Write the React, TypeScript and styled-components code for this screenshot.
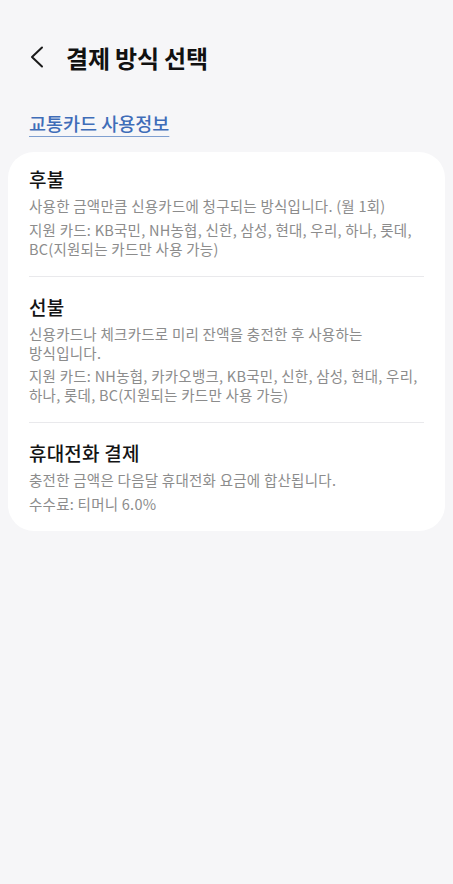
import styled, { createGlobalStyle } from "styled-components";

const GlobalStyle = createGlobalStyle`
  html, body {
    margin: 0;
    padding: 0;
    background: #f6f6f8;
  }
  body {
    font-family: "Noto Sans CJK KR", "Noto Sans", sans-serif;
  }
`;

const Page = styled.div`
  min-height: 884px;
  background: #f6f6f8;
  padding-top: 37px;
  box-sizing: border-box;
`;

const Header = styled.header`
  display: flex;
  align-items: center;
  height: 40px;
  padding-left: 29px;
  gap: 21px;
`;

const BackButton = styled.button`
  display: flex;
  align-items: center;
  justify-content: center;
  width: 16px;
  height: 24px;
  padding: 0;
  border: none;
  background: none;
  color: #1a1a1a;
`;

const Title = styled.h1`
  margin: 0;
  font-size: 24px;
  font-weight: 700;
  color: #111;
  letter-spacing: -0.2px;
`;

const LinkRow = styled.div`
  padding: 34px 29px 0;
  height: 24px;
  margin-bottom: 17px;
`;

const InfoLink = styled.a`
  font-size: 18.5px;
  font-weight: 500;
  line-height: 24px;
  color: #3f6db8;
  text-decoration: underline;
  text-decoration-color: #7f9fd0;
  text-decoration-thickness: 1px;
  text-underline-offset: 5px;
`;

const Card = styled.section`
  margin: 0 8px;
  padding: 0 21px;
  background: #fff;
  border-radius: 26px;
`;

const Item = styled.div<{ $first?: boolean; $last?: boolean }>`
  padding: ${({ $first }) => ($first ? "15px" : "18px")} 0 18px;
  border-bottom: ${({ $last }) => ($last ? "none" : "1.5px solid #e9e9ec")};
`;

const ItemTitle = styled.h2`
  margin: 0 0 5px;
  font-size: 19px;
  font-weight: 500;
  line-height: 24px;
  letter-spacing: 0.2px;
  color: #141414;
`;

const Desc = styled.p`
  margin: 0;
  font-size: 14.5px;
  line-height: 19px;
  letter-spacing: 0.25px;
  color: #8c8c8c;
  word-break: keep-all;

  & + & {
    margin-top: 4.5px;
  }
`;

const ChevronLeft = () => (
  <svg width="14" height="22" viewBox="0 0 14 22" fill="none">
    <polyline
      points="12,1.5 2,11 12,20.5"
      stroke="currentColor"
      strokeWidth="2"
      strokeLinecap="round"
      strokeLinejoin="round"
    />
  </svg>
);

const methods = [
  {
    title: "후불",
    lines: [
      "사용한 금액만큼 신용카드에 청구되는 방식입니다. (월 1회)",
      "지원 카드: KB국민, NH농협, 신한, 삼성, 현대, 우리, 하나, 롯데, BC(지원되는 카드만 사용 가능)",
    ],
  },
  {
    title: "선불",
    lines: [
      "신용카드나 체크카드로 미리 잔액을 충전한 후 사용하는 방식입니다.",
      "지원 카드: NH농협, 카카오뱅크, KB국민, 신한, 삼성, 현대, 우리, 하나, 롯데, BC(지원되는 카드만 사용 가능)",
    ],
  },
  {
    title: "휴대전화 결제",
    lines: [
      "충전한 금액은 다음달 휴대전화 요금에 합산됩니다.",
      "수수료: 티머니 6.0%",
    ],
  },
];

export default function App() {
  return (
    <>
      <GlobalStyle />
      <Page>
        <Header>
          <BackButton aria-label="뒤로">
            <ChevronLeft />
          </BackButton>
          <Title>결제 방식 선택</Title>
        </Header>
        <LinkRow>
          <InfoLink>교통카드 사용정보</InfoLink>
        </LinkRow>
        <Card>
          {methods.map((m, i) => (
            <Item key={m.title} $first={i === 0} $last={i === methods.length - 1}>
              <ItemTitle>{m.title}</ItemTitle>
              {m.lines.map((l) => (
                <Desc key={l}>{l}</Desc>
              ))}
            </Item>
          ))}
        </Card>
      </Page>
    </>
  );
}
